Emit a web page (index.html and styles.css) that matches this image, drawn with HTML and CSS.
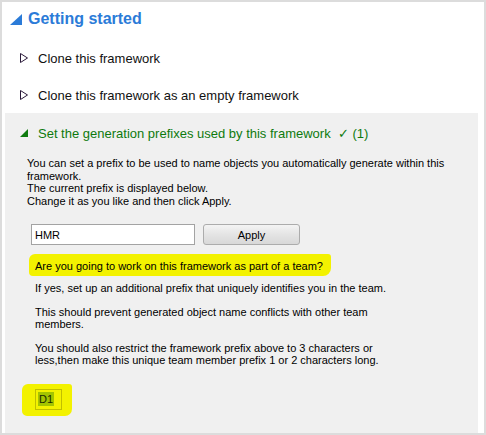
FILE: index.html
```html
<!DOCTYPE html>
<html lang="en">
<head>
  <meta charset="UTF-8">
  <title>Getting started</title>
  <link rel="stylesheet" href="styles.css">
</head>
<body>
  <div class="frame">
    <div class="section-title">
      <svg class="tri-big" width="12" height="11" viewBox="0 0 12 11"><polygon points="12,0 12,11 0,11" fill="#2b7bd8"/></svg>
      <span>Getting started</span>
    </div>

    <div class="task">
      <svg class="tri-open" width="8" height="10" viewBox="0 0 8 10"><polygon points="0.5,0.5 7.5,5 0.5,9.5" fill="none" stroke="#2a1a3a" stroke-width="1"/></svg>
      <span>Clone this framework</span>
    </div>
    <div class="task task-last">
      <svg class="tri-open" width="8" height="10" viewBox="0 0 8 10"><polygon points="0.5,0.5 7.5,5 0.5,9.5" fill="none" stroke="#2a1a3a" stroke-width="1"/></svg>
      <span>Clone this framework as an empty framework</span>
    </div>

    <div class="panel">
      <div class="panel-title">
        <svg class="tri-small" width="8" height="8" viewBox="0 0 8 8"><polygon points="8,0 8,8 0,8" fill="#0e7a0e"/></svg>
        <span>Set the generation prefixes used by this framework &nbsp;✓ (1)</span>
      </div>

      <p class="intro">
        You can set a prefix to be used to name objects you automatically generate within this<br>
        framework.<br>
        The current prefix is displayed below.<br>
        Change it as you like and then click Apply.
      </p>

      <div class="prefix-row">
        <input type="text" class="prefix-input" value="HMR">
        <button class="apply-btn">Apply</button>
      </div>

      <div class="team">
        <div class="marker"><span>Are you going to work on this framework as part of a team?</span></div>
        <p>If yes, set up an additional prefix that uniquely identifies you in the team.</p>
        <p>This should prevent generated object name conflicts with other team<br>members.</p>
        <p>You should also restrict the framework prefix above to 3 characters or<br>less,then make this unique team member prefix 1 or 2 characters long.</p>
      </div>

      <div class="member-mark">
        <div class="member-box"><span class="selected">D1</span></div>
      </div>
    </div>
  </div>
</body>
</html>
```

FILE: styles.css
```css
body {
  margin: 0;
  font-family: "Liberation Sans", Arial, sans-serif;
  background-color: #ffffff;
}
.frame {
  width: 486px;
  height: 435px;
  box-sizing: border-box;
  border: 2px solid #dcdcdc;
  background-color: #ffffff;
  padding: 0 6px 0 3px;
  display: flex;
  flex-direction: column;
  overflow: hidden;
}
.section-title {
  display: flex;
  align-items: center;
  gap: 6px;
  padding: 7px 0 10px 5px;
  height: 20px;
  color: #2b7bd8;
  font-size: 16px;
  font-weight: bold;
}
.tri-big {
  margin-top: 1px;
}
.task {
  display: flex;
  align-items: center;
  height: 38px;
  padding-left: 15px;
  font-size: 13px;
  color: #111111;
}
.task-last {
  height: 36px;
}
.tri-open {
  margin-right: 10px;
}
.panel {
  flex: 1;
  background-color: #f0f0f0;
  padding: 10px 0 0 15px;
  font-size: 11px;
  color: #000000;
}
.panel-title {
  display: flex;
  align-items: center;
  height: 20px;
  color: #0e7a0e;
  font-size: 13px;
}
.tri-small {
  margin-right: 10px;
}
.intro {
  margin: 14px 0 0 7px;
  line-height: 12.5px;
}
.prefix-row {
  display: flex;
  gap: 8px;
  margin: 17px 0 0 11px;
}
.prefix-input {
  width: 164px;
  height: 21px;
  box-sizing: border-box;
  border: 1px solid #a3a3a3;
  background-color: #ffffff;
  padding: 0 3px;
  font-family: inherit;
  font-size: 11px;
  color: #000000;
  outline: none;
}
.apply-btn {
  width: 97px;
  height: 21px;
  border: 1px solid #acacac;
  border-radius: 3px;
  background: linear-gradient(#f4f4f4, #e4e4e4 50%, #d8d8d8);
  font-family: inherit;
  font-size: 11px;
  color: #000000;
  padding: 0;
}
.team {
  margin: 9px 0 0 9px;
  line-height: 12px;
}
.marker {
  display: inline-block;
  background-color: #f3f200;
  border-radius: 6px 3px 8px 4px;
  padding: 6px 8px 4px 6px;
  margin-bottom: 6px;
}
.team p {
  margin: 0 0 12px 6px;
}
.team p:last-child {
  margin-bottom: 0;
}
.member-mark {
  width: max-content;
  margin: 18px 0 0 2px;
  padding: 5px 10px 6px 13px;
  background-color: #f3f200;
  border-radius: 6px 3px 7px 5px;
}
.member-box {
  width: 27px;
  height: 21px;
  box-sizing: border-box;
  border: 1px solid #c2bf00;
  padding: 3px 0 0 2px;
}
.selected {
  background-color: #a4c400;
  color: #1a2a00;
  padding: 1px 1px;
  font-size: 11px;
}
```
